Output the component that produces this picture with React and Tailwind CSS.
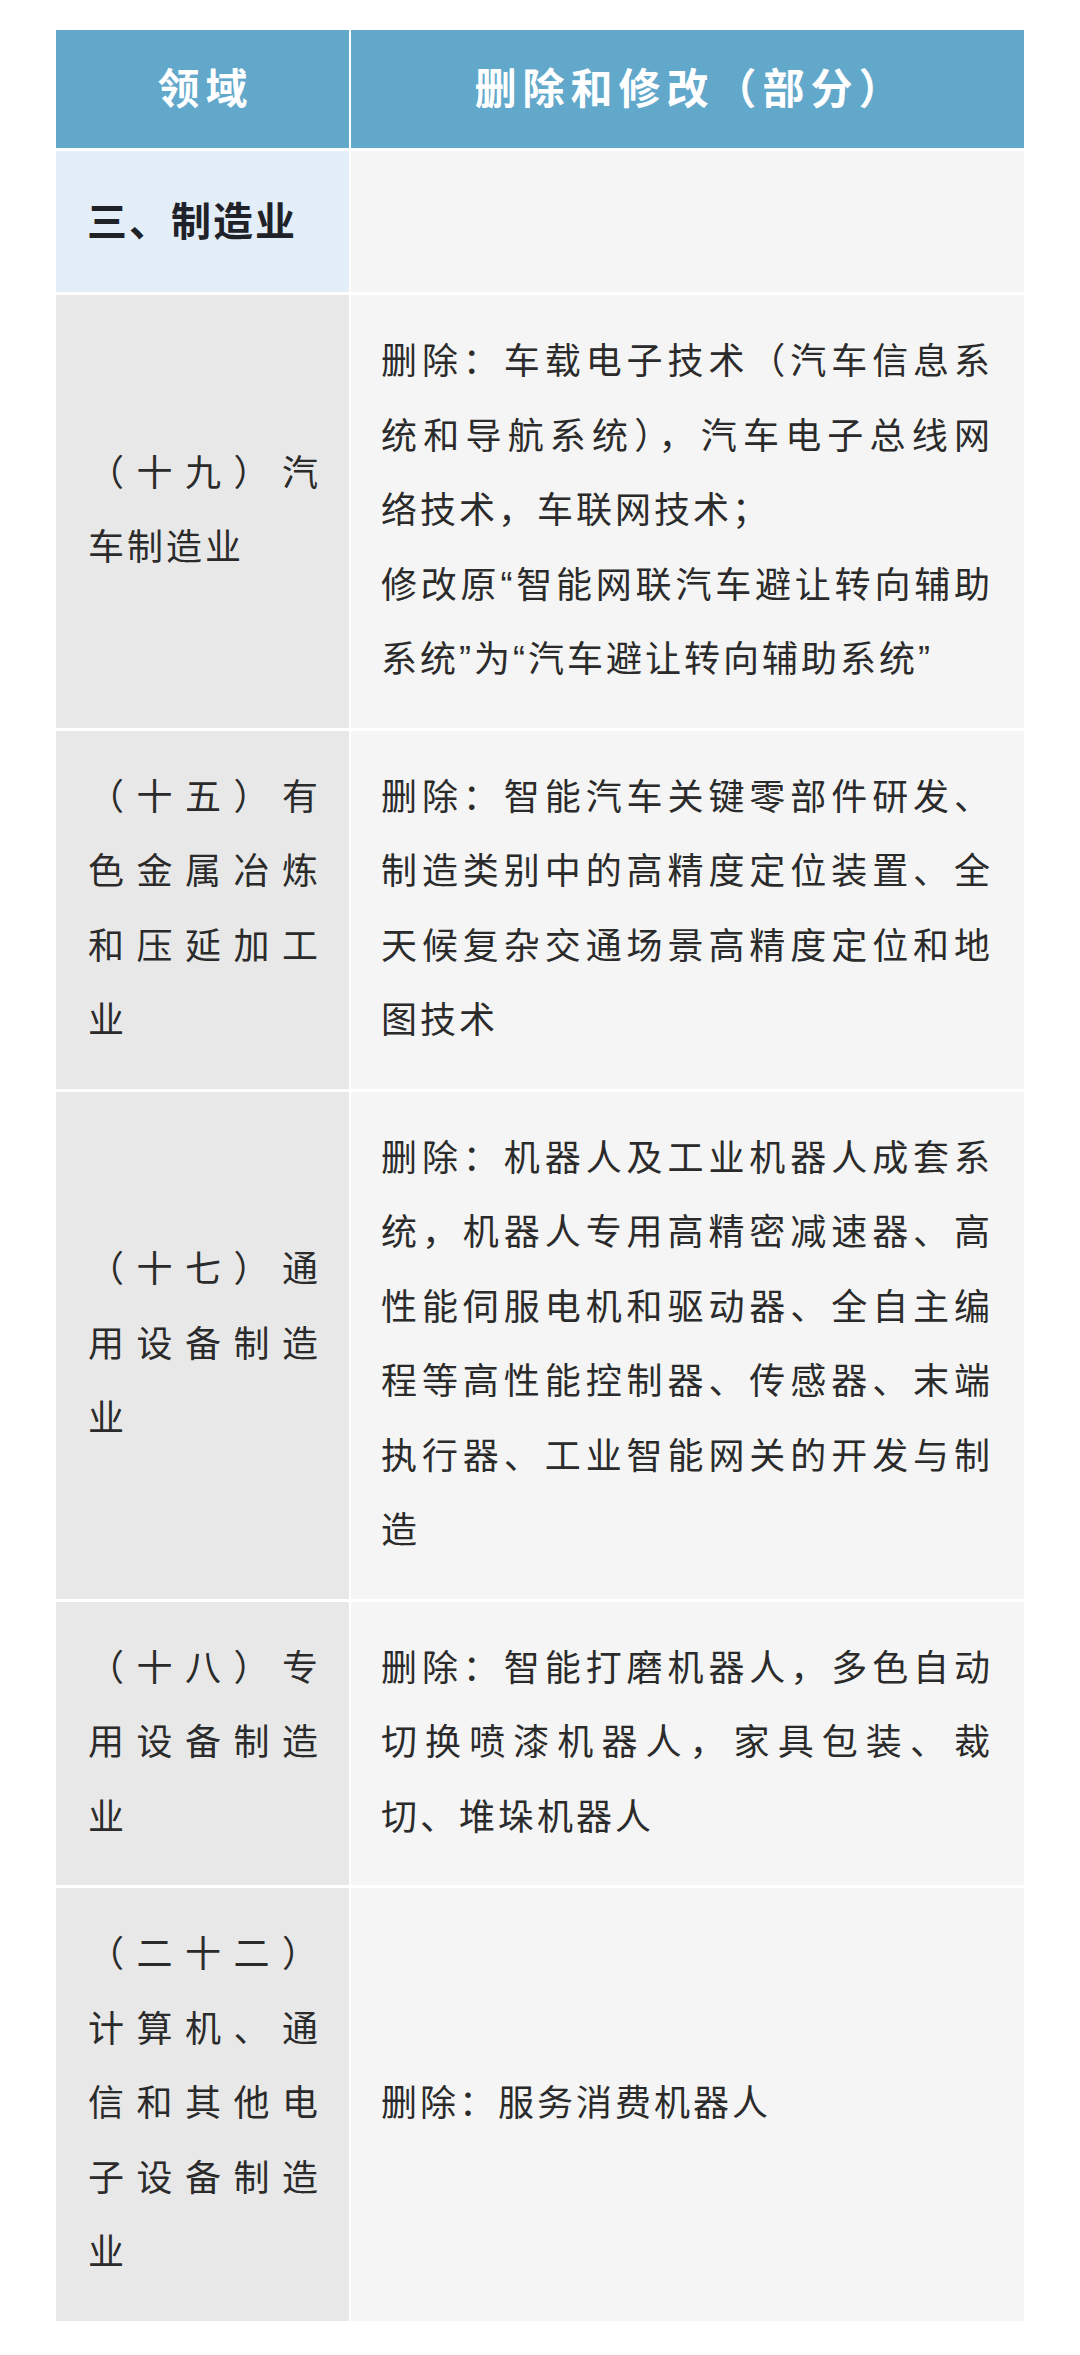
import React from 'react';

const rows = [
  {
    left: ['（十九）汽', '车制造业'],
    right: [
      ['删除：车载电子技术（汽车信息系', true],
      ['统和导航系统），汽车电子总线网', true],
      ['络技术，车联网技术；', false],
      ['修改原“智能网联汽车避让转向辅助', true],
      ['系统”为“汽车避让转向辅助系统”', false],
    ],
  },
  {
    left: ['（十五）有', '色金属冶炼', '和压延加工', '业'],
    right: [
      ['删除：智能汽车关键零部件研发、', true],
      ['制造类别中的高精度定位装置、全', true],
      ['天候复杂交通场景高精度定位和地', true],
      ['图技术', false],
    ],
  },
  {
    left: ['（十七）通', '用设备制造', '业'],
    right: [
      ['删除：机器人及工业机器人成套系', true],
      ['统，机器人专用高精密减速器、高', true],
      ['性能伺服电机和驱动器、全自主编', true],
      ['程等高性能控制器、传感器、末端', true],
      ['执行器、工业智能网关的开发与制', true],
      ['造', false],
    ],
  },
  {
    left: ['（十八）专', '用设备制造', '业'],
    right: [
      ['删除：智能打磨机器人，多色自动', true],
      ['切换喷漆机器人，家具包装、裁', true],
      ['切、堆垛机器人', false],
    ],
  },
  {
    left: ['（二十二）', '计算机、通', '信和其他电', '子设备制造', '业'],
    right: [['删除：服务消费机器人', false]],
  },
];

const font = { fontFamily: '"Liberation Sans", "Noto Sans CJK SC", sans-serif' };

function Line({ text, justify }) {
  return (
    <div className={justify ? 'text-justify [text-align-last:justify]' : 'text-left'}>
      {text}
    </div>
  );
}

export default function App() {
  return (
    <div className="min-h-[2355px] bg-white px-[56px] pt-[30px]" style={font}>
      <div className="flex flex-col gap-[3px]">
        {/* header */}
        <div className="flex gap-[2px]">
          <div className="flex h-[118px] w-[293px] shrink-0 items-center justify-center bg-[#62a8cb] pl-[6px] text-[42px] font-bold tracking-[6px] text-white">
            领域
          </div>
          <div className="flex h-[118px] flex-1 items-center justify-center bg-[#62a8cb] pl-[6px] text-[42px] font-bold tracking-[6px] text-white">
            删除和修改（部分）
          </div>
        </div>

        <div className="flex gap-[2px]">
          <div className="flex h-[141px] w-[293px] shrink-0 items-center bg-[#e3eef9] pl-[31px] text-[40px] font-bold tracking-[2px] text-[#1f2329]">
            三、制造业
          </div>
          <div className="h-[141px] flex-1 bg-[#f5f5f5]" />
        </div>

        {rows.map((row, i) => (
          <div key={i} className="flex gap-[2px] text-[36px] leading-[74.5px] tracking-[3px] text-[#2b2b2b]">
            <div className="flex w-[293px] shrink-0 flex-col justify-center bg-[#e8e8e8] py-[30px] pl-[32px] pr-[28px]">
              {row.left.map((t, j) => (
                <Line key={j} text={t} justify={j < row.left.length - 1 || t.length === 5} />
              ))}
            </div>
            <div className="flex flex-1 flex-col justify-center bg-[#f5f5f5] py-[30px] pl-[30px] pr-[31px]">
              {row.right.map(([t, j], k) => (
                <Line key={k} text={t} justify={j} />
              ))}
            </div>
          </div>
        ))}
      </div>
    </div>
  );
}
